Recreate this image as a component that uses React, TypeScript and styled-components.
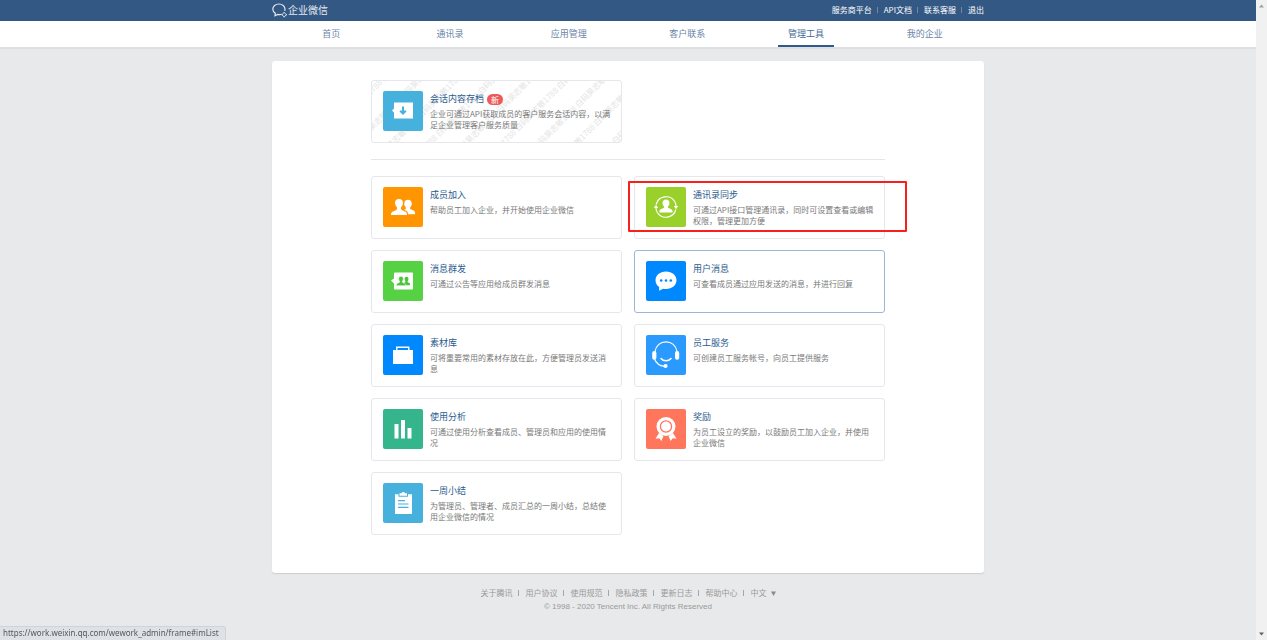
import React from 'react';
import styled, { createGlobalStyle, css } from 'styled-components';

const GlobalStyle = createGlobalStyle`
  *, *::before, *::after { box-sizing: border-box; }
  body {
    margin: 0;
    background: #e8e9eb;
    font-family: "Noto Sans CJK SC", "Liberation Sans", sans-serif;
    font-size: 8px;
    color: #787878;
  }
  a { color: inherit; text-decoration: none; }
  h1, h2, p, ul { margin: 0; padding: 0; font-weight: 400; }
  ul { list-style: none; }
`;

const Shell = styled.div`
  display: flex;
  min-height: 100vh;
`;

const Page = styled.div`
  flex: 1;
  min-width: 0;
`;

const Container = styled.div`
  width: 100%;
  max-width: 712px;
  margin: 0 auto;
`;

const TopBar = styled.header`
  background: #335883;
  color: #fff;
`;

const TopBarInner = styled(Container)`
  display: flex;
  align-items: flex-start;
  justify-content: space-between;
  height: 21px;
`;

const Brand = styled.a`
  display: flex;
  align-items: center;
  font-size: 10px;
  line-height: 20px;
  color: #e3e9f0;
`;

const AccountLinks = styled.nav`
  display: flex;
  align-items: center;
  line-height: 20px;
`;

const Bar = styled.span<{ $tone?: 'dark' | 'light' }>`
  width: 1px;
  height: 6px;
  margin: ${(p) => (p.$tone === 'dark' ? '0 6px 0 5px' : '0 7px 0 5px')};
  background: ${(p) => (p.$tone === 'dark' ? '#6d88a8' : '#a4a6a9')};
`;

const MainNav = styled.nav`
  background: #fff;
  border-bottom: 1px solid #dfe0e2;
  box-shadow: 0 1px 1px rgba(0, 0, 0, 0.04);
`;

const Tabs = styled(Container)`
  display: grid;
  grid-template-columns: repeat(6, 1fr);
  justify-items: center;
`;

const Tab = styled.a<{ $active?: boolean }>`
  height: 26px;
  padding: 0 10px;
  font-size: 9px;
  line-height: 26px;
  color: #6b86a8;
  ${(p) =>
    p.$active &&
    css`
      color: #446a97;
      box-shadow: inset 0 -2px #2e5a8c;
    `}
`;

const Panel = styled.main`
  width: 100%;
  max-width: 712px;
  margin: 13px auto 0;
  padding: 19px 99px 38px;
  background: #fff;
  border-radius: 3px;
  box-shadow: 0 1px 1px rgba(0, 0, 0, 0.12);
`;

const CardGrid = styled.div`
  display: grid;
  grid-template-columns: 1fr 1fr;
  gap: 11px 12px;
`;

const Divider = styled.hr`
  height: 1px;
  margin: 16px 0;
  border: 0;
  background: #e4e6e9;
`;

const CardFrame = styled.div`
  position: relative;
`;

const Card = styled.a<{ $hover?: boolean }>`
  position: relative;
  display: flex;
  gap: 7px;
  height: 63px;
  padding: 10px 9px 10px 11px;
  border: 1px solid ${(p) => (p.$hover ? '#9ab6d8' : '#e4e7eb')};
  border-radius: 3px;
  overflow: hidden;
`;

const Tile = styled.span<{ $color: string }>`
  position: relative;
  flex: none;
  width: 40px;
  height: 40px;
  border-radius: 2px;
  background: ${(p) => p.$color};
  svg { display: block; }
`;

const CardText = styled.div`
  position: relative;
  flex: 1;
  min-width: 0;
`;

const CardTitle = styled.h2`
  display: flex;
  align-items: center;
  gap: 3px;
  margin-bottom: 1px;
  font-size: 9px;
  line-height: 16px;
  color: #2b5c8e;
`;

const NewBadge = styled.span`
  padding: 0 4px;
  border-radius: 6px;
  background: #ee5a5a;
  color: #fff;
  font-size: 8px;
  line-height: 11px;
`;

const CardDesc = styled.p`
  font-size: 8px;
  line-height: 11px;
`;

const Watermark = styled.div`
  position: absolute;
  inset: -80px 0;
  display: grid;
  align-content: center;
  justify-content: center;
  transform: rotate(-45deg);
  color: #e4e4e4;
  font-size: 8px;
  line-height: 26px;
  white-space: nowrap;
`;

const Marker = styled.div`
  position: absolute;
  inset: 5px -22px 7px -6px;
  border: 2px solid #f8201c;
  border-radius: 1px;
  pointer-events: none;
`;

const Footer = styled.footer`
  padding: 14px 0 24px;
  color: #999;
  text-align: center;
`;

const FooterLinks = styled.div`
  display: flex;
  align-items: center;
  justify-content: center;
  line-height: 12px;
`;

const LanguagePicker = styled.label`
  display: flex;
  align-items: center;
  gap: 4px;
`;

const LanguageSelect = styled.select`
  appearance: none;
  width: 16px;
  padding: 0;
  border: 0;
  background: none;
  color: inherit;
  font: inherit;
  line-height: 12px;
`;

const Copyright = styled.p`
  margin-top: 2px;
  font-family: "Liberation Sans", sans-serif;
  font-size: 8px;
  line-height: 12px;
`;

const StatusBubble = styled.div`
  position: fixed;
  left: 0;
  bottom: 0;
  padding: 0 6px 1px 3px;
  border: 1px solid #d0d3d7;
  border-width: 1px 1px 0 0;
  border-radius: 0 3px 0 0;
  background: #dee1e6;
  color: #55585c;
  font-family: "Noto Sans", "Open Sans", sans-serif;
  font-size: 8px;
  line-height: 12px;
`;

const ScrollTrack = styled.div`
  position: sticky;
  top: 0;
  display: flex;
  flex-direction: column;
  justify-content: space-between;
  align-items: center;
  width: 11px;
  height: 100vh;
  padding: 4px 0;
  background: #f1f1f1;
`;

const Glyph = ({ children }: { children: React.ReactNode }) => (
  <svg width="40" height="40" viewBox="0 0 40 40" fill="#fff" aria-hidden="true">
    {children}
  </svg>
);

const Person = () => (
  <path d="M0-8.500c2.900 0 4.600 1.700 4.600 4.500 0 1.900-.8 3.400-1.900 4.500-.4.800-.2 1.700.6 2.100l3.600 1.600C8.400 4.900 8.700 6.300 8.700 8.500H-8.700c0-2.200.3-3.600 1.800-4.300l3.600-1.600c.8-.4 1-1.300.6-2.100-1.100-1.100-1.900-2.600-1.900-4.500 0-2.800 1.700-4.500 4.600-4.500z" />
);

const icons = {
  archive: (
    <Glyph>
      <path d="M11 11.500h19v16H11v-6L9 19.500l2-2z" />
      <path d="M20 15.500v7m-2.800-2.800 2.800 2.800 2.800-2.800" fill="none" stroke="#47b1de" strokeWidth="2" />
    </Glyph>
  ),
  people: (
    <Glyph>
      <g transform="translate(25 20) scale(.82 .85)"><Person /></g>
      <g transform="translate(16 20)" stroke="#ff9500" strokeWidth="1.200"><Person /></g>
      <path d="M7 28.500h18.500v1.500H7z" fill="#ff9500" />
    </Glyph>
  ),
  broadcast: (
    <Glyph>
      <path d="M12 11.500h17q1 0 1 1v15q0 1-1 1H12q-1 0-1-1v-5L8 19.500l3-2v-5q0-1 1-1z" />
      <g fill="#4ec43c">
        <g transform="translate(23.500 20) scale(.42 .5)"><Person /></g>
        <g transform="translate(18 20) scale(.52 .55)" stroke="#fff" strokeWidth="1"><Person /></g>
      </g>
    </Glyph>
  ),
  sync: (
    <Glyph>
      <g transform="translate(20 19) scale(.76)"><Person /></g>
      <g fill="none" stroke="#fff" strokeWidth="1.200">
        <path d="M10.200 17.500a10.200 10.200 0 0 1 18.500-3" />
        <path d="M29.800 22.500a10.200 10.200 0 0 1-18.500 3" />
        <path d="M28.700 14.500a10.200 10.200 0 0 1 1.400 5" />
        <path d="M11.300 25.500a10.200 10.200 0 0 1-1.400-5" />
      </g>
      <path d="M7.800 21l2.200-3.200 2.200 3.200zM27.800 19h4.400L30 22.200z" />
    </Glyph>
  ),
  chat: (
    <Glyph>
      <path d="M20 10.500c6 0 10.500 3.800 10.500 8.700S26 28 20 28c-1 0-1.900-.1-2.800-.3L13 29.800l.2-3.700c-2.300-1.600-3.700-4-3.700-6.900 0-4.900 4.500-8.700 10.500-8.700z" />
      <g fill="#0088ff"><circle cx="15.200" cy="19.500" r="1.300" /><circle cx="20" cy="19.500" r="1.300" /><circle cx="24.800" cy="19.500" r="1.300" /></g>
    </Glyph>
  ),
  briefcase: (
    <Glyph>
      <path d="M10 15h3v-3.500h13.500V15H30v14H10zm4.500 0H25v-2H14.500z" fillRule="evenodd" />
    </Glyph>
  ),
  headset: (
    <Glyph>
      <g fill="none" stroke="#fff" strokeWidth="1.200" strokeLinecap="round">
        <path d="M9 16.500C10 10.500 14.500 6.800 20 6.800S30 10.500 31 16.500" />
        <path d="M8.500 24c1.500 4 5.500 6.800 10 7.300" />
        <path d="M15 23.500c2.500 3 7.500 3 10 0" strokeWidth="1.500" />
      </g>
      <rect x="6.200" y="16" width="4.200" height="8.800" rx="2.100" />
      <rect x="29" y="16" width="4.200" height="8.800" rx="2.100" />
      <circle cx="19.500" cy="31" r="2.100" />
    </Glyph>
  ),
  chart: (
    <Glyph>
      <rect x="11.500" y="15" width="4" height="14.500" rx=".5" />
      <rect x="18" y="11" width="4" height="18.500" rx=".5" />
      <rect x="24.500" y="19" width="4" height="10.500" rx=".5" />
    </Glyph>
  ),
  award: (
    <Glyph>
      <path d="M13 24l4.500 3-2.200 5-2-2.800-3.800.6zM27 24l-4.500 3 2.200 5 2-2.800 3.800.6z" />
      <circle cx="20" cy="17.500" r="9.500" />
      <circle cx="20" cy="17.500" r="5.600" fill="none" stroke="#ff765d" strokeWidth="1.300" />
    </Glyph>
  ),
  report: (
    <Glyph>
      <path d="M12 11.300h3.500v2.500h9.500v-2.500h4V31H12z" />
      <path d="M16.500 10.300h2a1.800 1.800 0 0 1 3.500 0h2v2.500h-7.500z" />
      <path d="M15 17.700h7M15 21h10.500M15 24.300h10.500" stroke="#47b1de" strokeWidth="1.200" />
    </Glyph>
  ),
};

type Tool = {
  icon: keyof typeof icons;
  color: string;
  title: string;
  desc: string;
  hover?: boolean;
  marked?: boolean;
};

const tools: Tool[] = [
  { icon: 'people', color: '#ff9500', title: '成员加入', desc: '帮助员工加入企业，并开始使用企业微信' },
  { icon: 'sync', color: '#9ad02a', title: '通讯录同步', desc: '可通过API接口管理通讯录，同时可设置查看或编辑权限，管理更加方便', marked: true },
  { icon: 'broadcast', color: '#56d144', title: '消息群发', desc: '可通过公告等应用给成员群发消息' },
  { icon: 'chat', color: '#0088ff', title: '用户消息', desc: '可查看成员通过应用发送的消息，并进行回复', hover: true },
  { icon: 'briefcase', color: '#0088ff', title: '素材库', desc: '可将重要常用的素材存放在此，方便管理员发送消息' },
  { icon: 'headset', color: '#2a9aff', title: '员工服务', desc: '可创建员工服务帐号，向员工提供服务' },
  { icon: 'chart', color: '#34b58c', title: '使用分析', desc: '可通过使用分析查看成员、管理员和应用的使用情况' },
  { icon: 'award', color: '#ff765d', title: '奖励', desc: '为员工设立的奖励，以鼓励员工加入企业，并使用企业微信' },
  { icon: 'report', color: '#47b1de', title: '一周小结', desc: '为管理员、管理者、成员汇总的一周小结，总结使用企业微信的情况' },
];

const tabs = ['首页', '通讯录', '应用管理', '客户联系', '管理工具', '我的企业'];
const accountLinks = ['服务商平台', 'API文档', '联系客服', '退出'];
const footerLinks = ['关于腾讯', '用户协议', '使用规范', '隐私政策', '更新日志', '帮助中心'];

const watermarkRow = Array(4).fill('白码吴志敏1788').join(' ');

const ToolCard = ({ tool }: { tool: Tool }) => (
  <CardFrame>
    <Card href="#" $hover={tool.hover}>
      <Tile $color={tool.color}>{icons[tool.icon]}</Tile>
      <CardText>
        <CardTitle>{tool.title}</CardTitle>
        <CardDesc>{tool.desc}</CardDesc>
      </CardText>
    </Card>
    {tool.marked && <Marker />}
  </CardFrame>
);

export default function App() {
  return (
    <Shell>
      <GlobalStyle />
      <Page>
        <TopBar>
          <TopBarInner>
            <Brand href="#">
              <svg width="16" height="16" viewBox="0 0 16 16" fill="none" stroke="#e3e9f0" strokeWidth="1.200" aria-hidden="true">
                <path d="M9.800 12.300c-1.200.4-2.700.5-4.100.1L3 13.700l.3-2.500C1.700 10.200.8 8.800.8 7.200.8 4.200 3.500 2 6.900 2s6.100 2.200 6.100 5.200c0 .6-.1 1.200-.3 1.700" />
                <path d="M12.200 10.200l1 1.500 1.700 1-1.700 1-1 1.500-1-1.500-1.500-1 1.500-1z" strokeWidth=".9" />
              </svg>
              企业微信
            </Brand>
            <AccountLinks aria-label="账户">
              {accountLinks.map((label, i) => (
                <React.Fragment key={label}>
                  {i > 0 && <Bar $tone="dark" />}
                  <a href="#">{label}</a>
                </React.Fragment>
              ))}
            </AccountLinks>
          </TopBarInner>
        </TopBar>
        <MainNav aria-label="主导航">
          <Tabs>
            {tabs.map((label) => (
              <Tab key={label} href="#" $active={label === '管理工具'}>{label}</Tab>
            ))}
          </Tabs>
        </MainNav>
        <Panel>
          <CardGrid>
            <Card href="#">
              <Watermark aria-hidden="true">
                {Array.from({ length: 9 }, (_, i) => <span key={i}>{watermarkRow}</span>)}
              </Watermark>
              <Tile $color="#47b1de">{icons.archive}</Tile>
              <CardText>
                <CardTitle>会话内容存档<NewBadge>新</NewBadge></CardTitle>
                <CardDesc>企业可通过API获取成员的客户服务会话内容，以满足企业管理客户服务质量</CardDesc>
              </CardText>
            </Card>
          </CardGrid>
          <Divider />
          <CardGrid>
            {tools.map((tool) => <ToolCard key={tool.title} tool={tool} />)}
          </CardGrid>
        </Panel>
        <Footer>
          <FooterLinks>
            {footerLinks.map((label) => (
              <React.Fragment key={label}>
                <a href="#">{label}</a>
                <Bar />
              </React.Fragment>
            ))}
            <LanguagePicker>
              <LanguageSelect aria-label="语言" defaultValue="zh">
                <option value="zh">中文</option>
              </LanguageSelect>
              <svg width="5" height="5" viewBox="0 0 5 5" fill="#8c8c8c" aria-hidden="true">
                <path d="M0 .5h5L2.500 5z" />
              </svg>
            </LanguagePicker>
          </FooterLinks>
          <Copyright>© 1998 - 2020 Tencent Inc. All Rights Reserved</Copyright>
        </Footer>
      </Page>
      <ScrollTrack aria-hidden="true">
        <svg width="5" height="4" viewBox="0 0 5 4" fill="#a0a0a0"><path d="M0 3.500h5L2.500.5z" /></svg>
        <svg width="5" height="4" viewBox="0 0 5 4" fill="#606060"><path d="M0 .5h5L2.500 3.500z" /></svg>
      </ScrollTrack>
      <StatusBubble role="status">https://work.weixin.qq.com/wework_admin/frame#imList</StatusBubble>
    </Shell>
  );
}
